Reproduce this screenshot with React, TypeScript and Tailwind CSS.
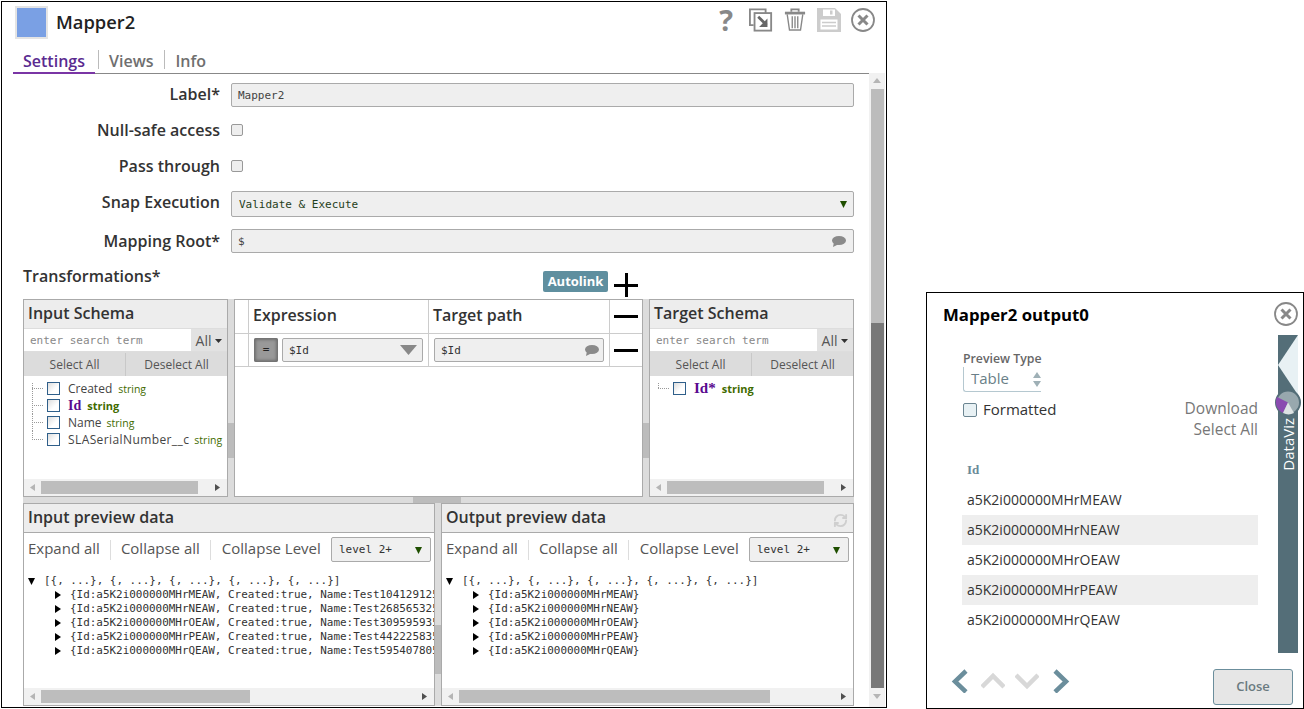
import { RefreshCw } from 'lucide-react';

const inputIds = ['MEAW', 'NEAW', 'OEAW', 'PEAW', 'QEAW'];
const inputNames = ['10412912', '26856532', '30959593', '44222583', '59540780'];

function Caret({ className = 'fill-[#1f4f00]' }: { className?: string }) {
  return (
    <svg width="7" height="7" viewBox="0 0 7 7" className={className}>
      <polygon points="0,0 7,0 3.5,7" />
    </svg>
  );
}

function Bubble({ className = '' }: { className?: string }) {
  return (
    <svg width="15" height="11" viewBox="0 0 15 11" className={className}>
      <ellipse cx="8" cy="4.5" rx="7" ry="4.5" fill="#8a8a8a" />
      <polygon points="3,6 2,11 8,8" fill="#8a8a8a" />
    </svg>
  );
}

function FormRow({
  label,
  children,
  className = '',
  labelClass = '',
}: {
  label: string;
  children: React.ReactNode;
  className?: string;
  labelClass?: string;
}) {
  return (
    <div className={`flex items-center ${className}`}>
      <div className={`w-[197px] mr-[11px] text-right text-[16px] font-semibold text-[#333] ${labelClass}`}>{label}</div>
      {children}
    </div>
  );
}

function Check() {
  return <div className="w-[12px] h-[12px] rounded-[2px] border border-[#999] bg-[#eee]" />;
}

function HScroll({ left, width }: { left: number; width: number }) {
  return (
    <div className="h-[17px] shrink-0 bg-[#f1f1f1] flex items-center">
      <svg width="6" height="7" viewBox="0 0 6 7" className="ml-[6px] fill-[#b5b5b5] shrink-0">
        <polygon points="5,0 5,7 0,3.5" />
      </svg>
      <div className="h-[13px] bg-[#bdbdbd] shrink-0" style={{ marginLeft: left, width }} />
      <svg width="6" height="7" viewBox="0 0 6 7" className="ml-auto mr-[6px] fill-[#505050] shrink-0">
        <polygon points="0,0 0,7 5,3.5" />
      </svg>
    </div>
  );
}

function SchemaPanel({
  title,
  thumb,
  children,
}: {
  title: string;
  thumb: number;
  children: React.ReactNode;
}) {
  return (
    <div className="w-[205px] shrink-0 border border-[#aaa] flex flex-col bg-white">
      <div className="h-[28px] bg-[#ededed] pl-[4px] pb-[2px] flex items-center text-[16px] font-semibold text-[#333]">{title}</div>
      <div className="h-[24px] border-t border-b border-[#ddd] flex shrink-0">
        <div className="flex-1 pl-[6px] pt-[2px] flex items-center font-['DejaVu_Sans_Mono',monospace] text-[11px] text-[#888]">
          enter search term
        </div>
        <div className="w-[36px] bg-[#e2e2e2] pt-[1px] flex items-center justify-center gap-[4px] text-[14px] text-[#555]">
          All
          <svg width="7" height="4" viewBox="0 0 7 4" className="fill-[#333]">
            <polygon points="0,0 7,0 3.5,4" />
          </svg>
        </div>
      </div>
      <div className="h-[24px] pt-[1px] bg-[#dcdcdc] flex text-[12px] text-[#555] shrink-0">
        <div className="w-[102px] border-r border-[#c8c8c8] flex items-center justify-center">Select All</div>
        <div className="flex-1 flex items-center justify-center">Deselect All</div>
      </div>
      <div className="flex-1 pt-[4px] overflow-hidden">{children}</div>
      <HScroll left={5} width={thumb} />
    </div>
  );
}

function TreeRow({ children, last = false, first = false }: { children: React.ReactNode; last?: boolean; first?: boolean }) {
  return (
    <div className="h-[17px] flex items-center pl-[8px] whitespace-nowrap">
      <svg width="15" height="17" viewBox="0 0 15 17" className="shrink-0" stroke="#999" strokeDasharray="1 1">
        <line x1="0.5" y1={first ? 3 : 0} x2="0.5" y2={last ? 8 : 17} />
        <line x1="0" y1="8.5" x2="11" y2="8.5" />
      </svg>
      <div className="w-[13px] h-[13px] border border-[#2f5f8a] bg-[linear-gradient(135deg,#ddd_0%,#fff_60%)] shrink-0" />
      <div className="ml-[8px] flex items-baseline">{children}</div>
    </div>
  );
}

function Plain({ name, gap = 5, className = '' }: { name: string; gap?: number; className?: string }) {
  return (
    <>
      <span className={`text-[12px] text-[#444] ${className}`}>{name}</span>
      <span className="text-[10.5px] text-[#3f6b00]" style={{ marginLeft: gap }}>string</span>
    </>
  );
}

function Splitter({ top }: { top: number }) {
  return (
    <div className="w-[6px] shrink-0 bg-[#dcdcdc]" style={{ paddingTop: top }}>
      <div className="h-[35px] bg-[#bcbcbc]" />
    </div>
  );
}

function Minus() {
  return <div className="w-[24px] h-[3px] bg-black" />;
}

function PreviewPanel({
  title,
  width,
  rows,
  thumbWidth,
  selectGap,
  refresh = false,
}: {
  title: string;
  width: number;
  rows: string[];
  thumbWidth: number;
  selectGap: number;
  refresh?: boolean;
}) {
  return (
    <div className="shrink-0 border border-[#aaa] flex flex-col overflow-hidden" style={{ width }}>
      <div className="h-[29px] shrink-0 bg-[#ededed] border-b border-[#aaa] pl-[4px] pr-[5px] pb-[3px] flex items-center text-[16px] font-semibold text-[#333]">
        {title}
        {refresh && <RefreshCw size={15} strokeWidth={3} className="ml-auto mt-[8px] text-[#cfcfcf]" />}
      </div>
      <div className="h-[33px] shrink-0 flex items-center pl-[4px] text-[15px] text-[#555] whitespace-nowrap">
        <span className="-mt-[2px]">Expand all</span>
        <div className="w-px h-[20px] bg-[#ddd] ml-[10px] mr-[10px]" />
        <span className="-mt-[2px]">Collapse all</span>
        <div className="w-px h-[20px] bg-[#ddd] ml-[10px] mr-[11px]" />
        <span className="-mt-[2px]">Collapse Level</span>
        <div
          className="ml-auto w-[100px] h-[25px] rounded-[2px] border border-[#aaa] bg-[#f0f0f0] flex items-center pl-[7px] pr-[8px] pt-[2px] font-['DejaVu_Sans_Mono',monospace] text-[11px] text-[#333]"
          style={{ marginRight: selectGap }}
        >
          level 2+
          <Caret className="ml-auto fill-[#1f4f00]" />
        </div>
      </div>
      <div className="flex-1 pt-[8px] pl-[4px] overflow-hidden font-['DejaVu_Sans_Mono',monospace] text-[10.95px] leading-[14px] text-[#333] whitespace-nowrap">
        <div className="flex items-center">
          <Caret className="fill-black" />
          <span className="ml-[9px]">{'[{, ...}, {, ...}, {, ...}, {, ...}, {, ...}]'}</span>
        </div>
        {rows.map((row) => (
          <div key={row} className="flex items-center pl-[27px]">
            <svg width="6" height="8" viewBox="0 0 6 8" className="fill-black shrink-0">
              <polygon points="0,0 6,4 0,8" />
            </svg>
            <span className="ml-[9px]">{row}</span>
          </div>
        ))}
      </div>
      <HScroll left={5} width={thumbWidth} />
    </div>
  );
}

function CloseCircle({ size }: { size: number }) {
  return (
    <svg width={size} height={size} viewBox="0 0 24 24" fill="none" stroke="#888">
      <circle cx="12" cy="12" r="11" strokeWidth="1.8" />
      <path d="M7.5 7.5 16.5 16.5M16.5 7.5 7.5 16.5" strokeWidth="3" />
    </svg>
  );
}

function HeaderIcons() {
  return (
    <div className="ml-auto flex items-start pr-[11px]">
      <div className="text-[29px] leading-[30px] font-bold text-[#888] mr-[16px] -mt-[1px]">?</div>
      <svg width="24" height="24" viewBox="0 0 26 25" className="mr-[11px] mt-[2px]" fill="none" stroke="#888" strokeWidth="2">
        <path d="M5 18H1V1H18V5" />
        <rect x="6" y="5" width="18" height="19" />
        <path d="M10 9 19 18" strokeWidth="3" stroke="#666" />
        <polygon points="20,11 20,20 11,20" fill="#666" stroke="none" />
      </svg>
      <svg width="22" height="25" viewBox="0 0 24 25" className="mr-[11px] mt-[1px]" fill="none" stroke="#888" strokeWidth="1.5">
        <path d="M1 5.5H23" strokeWidth="3" />
        <path d="M8 4V1.5H16V4" strokeWidth="2" />
        <path d="M3.5 7 6 24H18L20.5 7" />
        <path d="M9 9V22M12 9V22M15 9V22" />
      </svg>
      <svg width="24" height="24" viewBox="0 0 24 24" className="mr-[10px] mt-[2px]">
        <path d="M0 0H18L24 6V24H0Z" fill="#ccc" />
        <rect x="6" y="1.5" width="12" height="6.5" fill="#fff" />
        <rect x="13" y="2.5" width="2.5" height="4" fill="#ccc" />
        <rect x="3.5" y="11.5" width="17" height="10" fill="#fff" />
        <path d="M5 14.5H19M5 18H19" stroke="#ccc" strokeWidth="1.5" />
      </svg>
      <div className="mt-[2px]">
        <CloseCircle size={24} />
      </div>
    </div>
  );
}

function Chevron({ points, color }: { points: string; color: string }) {
  return (
    <svg width="24" height="24" viewBox="0 0 24 24" fill="none" stroke={color} strokeWidth="4.5">
      <polyline points={points} />
    </svg>
  );
}

export default function App() {
  return (
    <div className="w-[1304px] h-[709px] bg-white flex items-start font-['Open_Sans',sans-serif] overflow-hidden">
      {/* Mapper settings window */}
      <div className="ml-[1px] mt-[1px] w-[886px] h-[707px] border border-black shrink-0 flex flex-col">
        <div className="h-[48px] shrink-0 flex items-start pl-[13px] pt-[4px]">
          <div className="w-[33px] h-[33px] border-[2px] border-[#e4e4e4] bg-[#7aa0e4]" />
          <div className="ml-[8px] mt-[3px] text-[18.3px] leading-[25px] font-semibold text-[#222]">Mapper2</div>
          <HeaderIcons />
        </div>
        <div className="h-[24px] w-[856px] ml-[11px] shrink-0 border-b border-[#888] flex text-[16px] font-semibold leading-[22px]">
          <div className="w-[82px] h-[24px] pl-[10px] border-b-[2px] border-[#7a35a5] text-[#5a2a90]">Settings</div>
          <div className="w-px h-[19px] bg-[#bbb] ml-[3px]" />
          <div className="ml-[10px] text-[#6f6f6f]">Views</div>
          <div className="w-px h-[19px] bg-[#bbb] ml-[11px]" />
          <div className="ml-[10px] text-[#6f6f6f]">Info</div>
        </div>
        <div className="flex-1 flex min-h-0">
          <div className="w-[867px] shrink-0 pl-[21px] pr-[15px] pt-[9px]">
            <FormRow label="Label*" className="h-[24px]" labelClass="-mt-[2px]">
              <div className="flex-1 h-[24px] rounded-[2px] border border-[#aaa] bg-[#efefef] pl-[6px] pt-[2px] flex items-center font-['DejaVu_Sans_Mono',monospace] text-[11px] text-[#444]">
                Mapper2
              </div>
            </FormRow>
            <FormRow label="Null-safe access" className="h-[24px] mt-[11px]">
              <Check />
            </FormRow>
            <FormRow label="Pass through" className="h-[24px] mt-[12px]">
              <Check />
            </FormRow>
            <FormRow label="Snap Execution" className="h-[26px] mt-[13px]" labelClass="-mt-[4px]">
              <div className="flex-1 h-[26px] rounded-[2px] border border-[#aaa] bg-[#efefef] pl-[7px] pr-[6px] flex items-center font-['DejaVu_Sans_Mono',monospace] text-[11px] text-[#1f4020]">
                <span className="pt-[2px]">Validate &amp; Execute</span>
                <Caret className="ml-auto fill-[#1f4f00]" />
              </div>
            </FormRow>
            <FormRow label="Mapping Root*" className="h-[24px] mt-[12px]">
              <div className="flex-1 h-[24px] rounded-[2px] border border-[#aaa] bg-[#efefef] pl-[6px] pr-[7px] flex items-center font-['DejaVu_Sans_Mono',monospace] text-[11px] text-[#444]">
                <span className="pt-[2px]">$</span>
                <Bubble className="ml-auto" />
              </div>
            </FormRow>
            <div className="h-[46px] flex items-start pt-[13px] text-[16px] font-semibold text-[#333]">
              <span className="leading-[20px]">Transformations*</span>
              <div className="ml-auto mt-[5px] mr-[6px] w-[65px] h-[21px] rounded-[2px] bg-[#5f8f9f] flex items-center justify-center text-[13px] font-bold text-white">
                Autolink
              </div>
              <div className="mt-[7px] mr-[216px] w-[24px] h-[24px] flex items-center justify-center relative">
                <div className="w-[24px] h-[3px] bg-black" />
                <div className="absolute left-[10.5px] top-0 w-[3px] h-[24px] bg-black" />
              </div>
            </div>
            <div className="h-[198px] flex">
              <SchemaPanel title="Input Schema" thumb={157}>
                <TreeRow first>
                  <Plain name="Created" gap={6} />
                </TreeRow>
                <TreeRow>
                  <span className="font-['Liberation_Serif',serif] text-[14px] font-bold text-[#5a0a90]">Id</span>
                  <span className="ml-[6px] text-[11px] font-bold text-[#3f6b00]">string</span>
                </TreeRow>
                <TreeRow>
                  <Plain name="Name" />
                </TreeRow>
                <TreeRow last>
                  <Plain name="SLASerialNumber__c" className="tracking-[0.4px]" />
                </TreeRow>
              </SchemaPanel>
              <Splitter top={124} />
              <div className="flex-1 border border-[#aaa] bg-white">
                <div className="h-[34px] flex border-b border-[#ccc] text-[16px] font-semibold text-[#333]">
                  <div className="w-[14px] border-r border-[#ccc]" />
                  <div className="w-[180px] border-r border-[#ccc] pl-[4px] pb-[3px] flex items-center">Expression</div>
                  <div className="w-[181px] border-r border-[#ccc] pl-[4px] pb-[3px] flex items-center">Target path</div>
                  <div className="flex-1 flex items-center justify-center">
                    <Minus />
                  </div>
                </div>
                <div className="h-[33px] flex border-b border-[#ccc]">
                  <div className="w-[14px] border-r border-[#ccc]" />
                  <div className="w-[180px] border-r border-[#ccc] pl-[5px] flex items-center font-['DejaVu_Sans_Mono',monospace] text-[11px] text-[#333]">
                    <div className="w-[24px] h-[24px] rounded-[2px] bg-[#999] shadow-[inset_0_0_3px_2px_#6f6f6f] flex items-center justify-center text-[#222]">=</div>
                    <div className="ml-[4px] w-[141px] h-[24px] rounded-[2px] border border-[#aaa] bg-[#efefef] pl-[6px] pr-[5px] flex items-center">
                      <span className="pt-[2px]">$Id</span>
                      <svg width="17" height="10" viewBox="0 0 17 10" className="ml-auto fill-[#888]">
                        <polygon points="0,0 17,0 8.5,10" />
                      </svg>
                    </div>
                  </div>
                  <div className="w-[181px] border-r border-[#ccc] pl-[5px] flex items-center font-['DejaVu_Sans_Mono',monospace] text-[11px] text-[#333]">
                    <div className="w-[170px] h-[24px] rounded-[2px] border border-[#aaa] bg-[#efefef] pl-[6px] pr-[4px] flex items-center">
                      <span className="pt-[2px]">$Id</span>
                      <Bubble className="ml-auto" />
                    </div>
                  </div>
                  <div className="flex-1 flex items-center justify-center">
                    <Minus />
                  </div>
                </div>
              </div>
              <Splitter top={124} />
              <SchemaPanel title="Target Schema" thumb={157}>
                <TreeRow first last>
                  <span className="font-['Liberation_Serif',serif] text-[15px] font-bold text-[#5a0a90]">Id*</span>
                  <span className="ml-[6px] text-[11px] font-bold text-[#3f6b00]">string</span>
                </TreeRow>
              </SchemaPanel>
            </div>
            <div className="h-[6px] bg-[#dcdcdc]">
              <div className="ml-[390px] w-[48px] h-[6px] bg-[#bcbcbc]" />
            </div>
            <div className="h-[203px] flex">
              <PreviewPanel
                title="Input preview data"
                width={412}
                thumbWidth={209}
                selectGap={3}
                rows={inputIds.map((id, i) => `{Id:a5K2i000000MHr${id}, Created:true, Name:Test${inputNames[i]}5`)}
              />
              <div className="w-[6px] shrink-0 bg-[#dcdcdc] pt-[122px]">
                <div className="h-[49px] bg-[#bcbcbc]" />
              </div>
              <PreviewPanel
                title="Output preview data"
                width={413}
                thumbWidth={311}
                selectGap={4}
                refresh
                rows={inputIds.map((id) => `{Id:a5K2i000000MHr${id}}`)}
              />
            </div>
          </div>
          {/* Page scrollbar */}
          <div className="w-[16px] shrink-0 -mt-[1px] bg-[#f1f1f1] flex flex-col items-center">
            <svg width="8" height="5" viewBox="0 0 8 5" className="mt-[5px] fill-[#b5b5b5]">
              <polygon points="4,0 8,5 0,5" />
            </svg>
            <div className="w-[13px] h-[234px] mt-[6px] bg-[#bcbcbc]" />
            <div className="w-[13px] h-[365px] bg-[#787878]" />
            <svg width="8" height="5" viewBox="0 0 8 5" className="mt-[6px] fill-[#b5b5b5]">
              <polygon points="0,0 8,0 4,5" />
            </svg>
          </div>
        </div>
      </div>

      {/* Data preview dialog */}
      <div className="ml-[39px] mt-[292px] w-[378px] h-[417px] border border-black shrink-0 flex flex-col">
        <div className="h-[42px] shrink-0 flex items-center pl-[16px] pr-[5px]">
          <span className="mt-[1px] text-[16.8px] font-bold text-black">Mapper2 output0</span>
          <div className="ml-auto">
            <CloseCircle size={24} />
          </div>
        </div>
        <div className="h-[318px] shrink-0 flex">
          <div className="w-[351px] shrink-0 pl-[35px] pr-[20px]">
            <div className="pt-[16px] pl-[1px] text-[12.3px] leading-[16px] font-semibold text-[#666]">Preview Type</div>
            <div className="ml-[1px] w-[78px] h-[25px] rounded-bl-[3px] border-l border-b border-[#b5c8d0] pl-[7px] flex items-center text-[15px] text-[#6a7f88]">
              <span className="-mt-[2px]">Table</span>
              <svg width="8" height="15" viewBox="0 0 8 15" className="ml-auto fill-[#9fb0b6]">
                <polygon points="4,0 8,6 0,6" />
                <polygon points="0,9 8,9 4,15" />
              </svg>
            </div>
            <div className="mt-[6px] h-[42px] flex items-start">
              <div className="ml-[1px] mt-[5px] w-[14px] h-[14px] rounded-[2px] border border-[#6b8591] bg-[#e8f1f4]" />
              <span className="ml-[6px] mt-[1px] text-[15px] leading-[21px] text-[#333]">Formatted</span>
              <div className="ml-auto text-right text-[15.5px] leading-[21px] text-[#777]">
                <div>Download</div>
                <div>Select All</div>
              </div>
            </div>
            <div className="mt-[20px] h-[25px] pl-[5px] font-['Liberation_Serif',serif] text-[13px] font-bold leading-[20px] text-[#6a8a99]">Id</div>
            {inputIds.map((id, i) => (
              <div
                key={id}
                className={`h-[30px] pl-[5px] pb-[2px] flex items-center text-[14px] text-[#333] ${i % 2 === 1 ? 'bg-[#eeeeee]' : ''}`}
              >
                a5K2i000000MHr{id}
              </div>
            ))}
          </div>
          <div className="w-[20px] shrink-0 bg-[#546e78] flex flex-col items-center">
            <svg width="28" height="82" viewBox="0 0 28 82" className="shrink-0 -mx-[4px] overflow-visible">
              <polygon points="24,0 24,60 4,30" fill="#e8f1f4" />
              <circle cx="14" cy="67.5" r="12" fill="#98a8ae" stroke="#546e78" strokeWidth="2" />
              <path d="M14 67.5 3 62A12 12 0 0 0 9 78Z" fill="#8a4bb0" />
              <path d="M14 67.5 9 78A12 12 0 0 0 20 78Z" fill="#dde3e4" />
            </svg>
            <div className="[writing-mode:vertical-rl] rotate-180 text-[15px] leading-[20px] text-white mt-[1px]">DataViz</div>
          </div>
        </div>
        <div className="flex-1 flex items-start pl-[22px] pr-[10px] pt-[16px]">
          <Chevron points="17,2 6,12.5 17,23" color="#6b8e9c" />
          <div className="ml-[8px]">
            <Chevron points="1,18 12,7 23,18" color="#d8d8d8" />
          </div>
          <div className="ml-[10px]">
            <Chevron points="1,6 12,17 23,6" color="#d8d8d8" />
          </div>
          <div className="ml-[9px]">
            <Chevron points="7,2 18,12.5 7,23" color="#6b8e9c" />
          </div>
          <div className="ml-auto w-[80px] h-[36px] rounded-[3px] border border-[#6b8e9c] bg-[#e6e6e6] flex items-center justify-center text-[13px] font-semibold text-[#6a7a80]">
            Close
          </div>
        </div>
      </div>
    </div>
  );
}
